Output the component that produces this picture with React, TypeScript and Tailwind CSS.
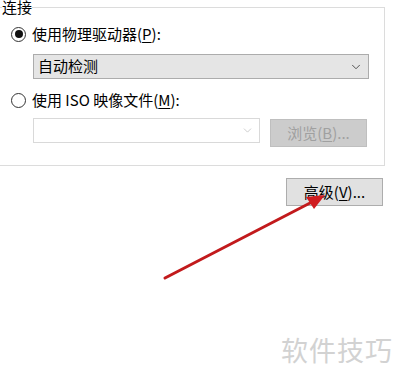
import { ChevronDown } from "lucide-react";

const font = { fontFamily: '"Noto Sans CJK SC", "Noto Sans", sans-serif' };

function Radio({ checked }: { checked?: boolean }) {
  return (
    <span className="w-[15px] h-[15px] rounded-full border border-[#333] bg-white flex items-center justify-center shrink-0">
      {checked && <span className="w-[8px] h-[8px] rounded-full bg-[#111]" />}
    </span>
  );
}

export default function App() {
  return (
    <div className="relative w-[395px] h-[379px] bg-white overflow-hidden text-black" style={font}>
      {/* Group box */}
      <fieldset className="w-[385px] border border-l-0 border-[#dcdcdc] pb-[18px]">
        <legend className="ml-[2px] px-0 text-[15px] leading-[14px]">连接</legend>

        <div className="mt-[10px] h-[20px] pl-[11px] flex items-center gap-[6px] text-[15px] leading-[20px]">
          <Radio checked />
          <span>
            使用物理驱动器(<span className="underline underline-offset-2">P</span>):
          </span>
        </div>

        <div className="mt-[10px] ml-[33px] w-[336px] h-[25px] bg-[#e5e5e5] border border-[#acacac] flex items-center justify-between pl-[4px] pr-[5px] text-[15px]">
          <span>自动检测</span>
          <ChevronDown size={14} strokeWidth={1.4} className="text-[#333]" />
        </div>

        <div className="mt-[11px] h-[20px] pl-[11px] flex items-center gap-[6px] text-[15px] leading-[20px]">
          <Radio />
          <span>
            使用 ISO 映像文件(<span className="underline underline-offset-2">M</span>):
          </span>
        </div>

        <div className="mt-[8px] ml-[33px] flex items-start gap-[10px]">
          <div className="w-[227px] h-[25px] bg-white border border-[#d9d9d9] flex items-center justify-end pr-[5px]">
            <ChevronDown size={13} strokeWidth={1.2} className="text-[#b4b4b4]" />
          </div>
          <div className="mt-[1px] w-[97px] h-[28px] bg-[#cccccc] border border-[#bfbfbf] flex items-center justify-center text-[15px] text-[#a0a0a0]">
            浏览(<span className="underline underline-offset-2">B</span>)...
          </div>
        </div>
      </fieldset>

      <div className="mt-[12px] ml-[286px] w-[97px] h-[28px] bg-[#e1e1e1] border border-[#adadad] flex items-center justify-center text-[15px]">
        高级(<span className="underline underline-offset-2">V</span>)...
      </div>

      {/* annotation arrow */}
      <svg className="absolute left-0 top-0 pointer-events-none" width="395" height="379">
        <line x1="165" y1="278" x2="312" y2="202" stroke="#c21a1c" strokeWidth="3" strokeLinecap="round" />
        <polygon points="325,195 306,197 314,209" fill="#d01c1f" />
      </svg>

      {/* watermark */}
      <div className="absolute left-[281px] top-[333px] text-[27px] leading-[34px] text-[#d2d2d2] tracking-[1px]">
        软件技巧
      </div>
    </div>
  );
}
